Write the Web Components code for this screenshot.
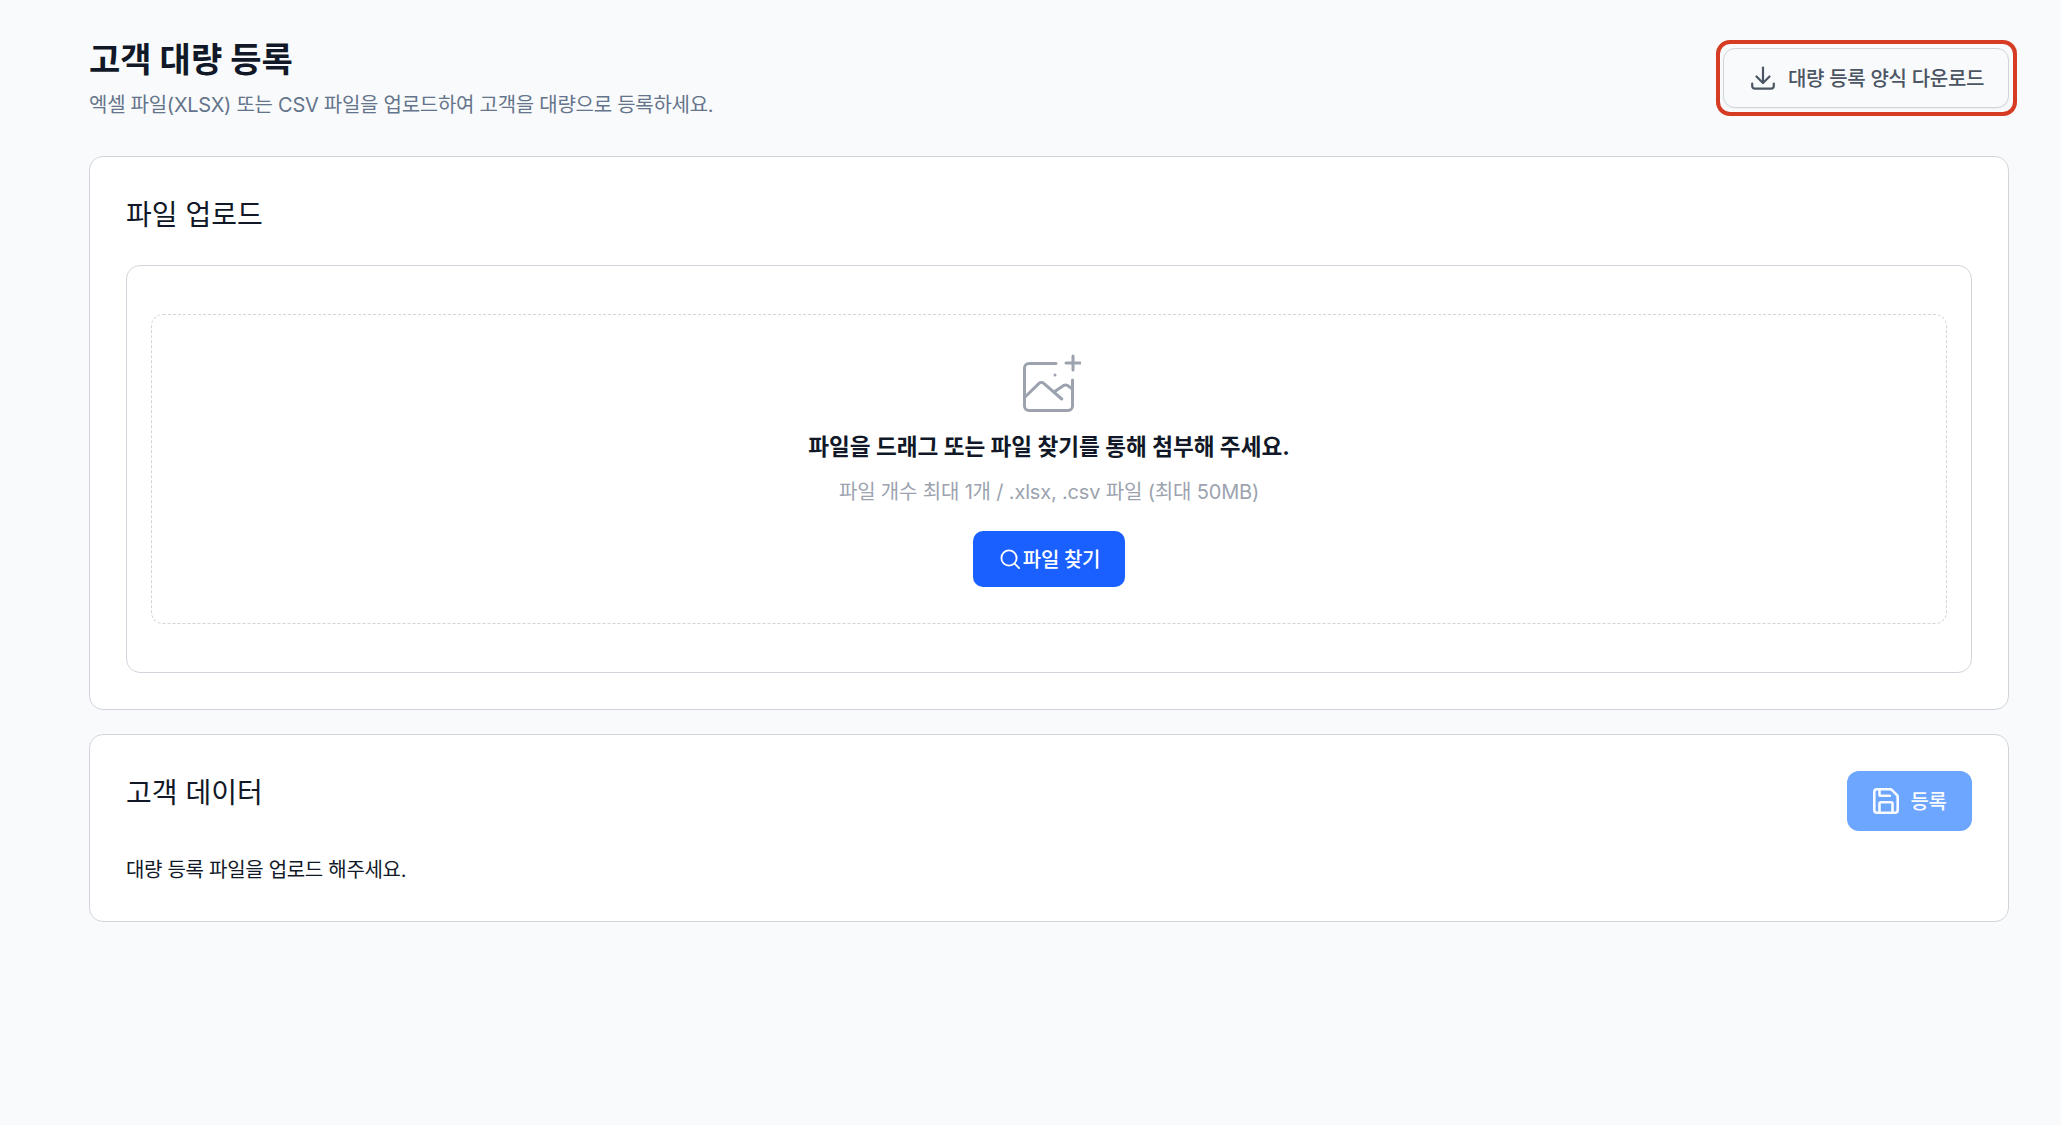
<!DOCTYPE html>
<html lang="ko">
<head>
<meta charset="utf-8">
<title>고객 대량 등록</title>
<style>
  html, body {
    margin: 0;
    background: #f9fafb;
    font-family: Inter, "Noto Sans CJK KR", sans-serif;
    color: #111827;
  }
</style>
</head>
<body>
<bulk-page>
  <page-header slot="header">
    <span slot="title">고객 대량 등록</span>
    <span slot="desc">엑셀 파일(XLSX) 또는 CSV 파일을 업로드하여 고객을 대량으로 등록하세요.</span>
    <ui-button slot="action" variant="outline">
      <svg slot="icon" width="24" height="24" viewBox="0 0 24 24" fill="none" stroke="currentColor" stroke-width="2.2" stroke-linecap="round" stroke-linejoin="round"><path d="M12 1.5v15"/><path d="M5.5 10.5l6.5 6.5 6.5-6.5"/><path d="M1.2 17.5v2.2a3 3 0 0 0 3 3h15.6a3 3 0 0 0 3-3v-2.2"/></svg>
      대량 등록 양식 다운로드
    </ui-button>
  </page-header>

  <ui-card>
    <span slot="title">파일 업로드</span>
    <upload-zone>
      <span slot="title">파일을 드래그 또는 파일 찾기를 통해 첨부해 주세요.</span>
      <span slot="hint">파일 개수 최대 1개 / .xlsx, .csv 파일 (최대 50MB)</span>
      <ui-button slot="action" variant="primary">
        <svg slot="icon" width="20" height="20" viewBox="0 0 20 20" fill="none" stroke="currentColor" stroke-width="1.8" stroke-linecap="round"><circle cx="9" cy="9" r="7.6"/><path d="M14.6 14.6l4.5 4.5"/></svg>
        파일 찾기
      </ui-button>
    </upload-zone>
  </ui-card>

  <ui-card>
    <span slot="title">고객 데이터</span>
    <ui-button slot="action" variant="disabled">
      <svg slot="icon" width="26" height="26" viewBox="2 2 20 20" fill="none" stroke="currentColor" stroke-width="2" stroke-linecap="round" stroke-linejoin="round"><path d="M15.2 3a2 2 0 0 1 1.4.6l3.8 3.8a2 2 0 0 1 .6 1.4V19a2 2 0 0 1-2 2H5a2 2 0 0 1-2-2V5a2 2 0 0 1 2-2z"/><path d="M17 21v-7a1 1 0 0 0-1-1H8a1 1 0 0 0-1 1v7"/><path d="M7 3v4a1 1 0 0 0 1 1h7"/></svg>
      등록
    </ui-button>
    <p style="margin:24px 0 0;font-size:20px;line-height:30px;letter-spacing:-.3px;">대량 등록 파일을 업로드 해주세요.</p>
  </ui-card>
</bulk-page>

<script>
const $button = document.createElement('template')
$button.innerHTML =
`<style>
  :host {
    display: inline-flex;
  }
  button {
    display: inline-flex;
    align-items: center;
    box-sizing: border-box;
    margin: 0;
    font: inherit;
    font-size: 20px;
    letter-spacing: -.3px;
    white-space: nowrap;
    cursor: pointer;
  }
  .label {
    margin-bottom: 2px;
  }
  :host([variant=outline]) button {
    height: 60px;
    width: 286px;
    padding: 0 0 0 27px;
    gap: 13px;
    font-weight: 500;
    color: #4b5563;
    background: #f9fafb;
    border: 1px solid #d1d5db;
    border-radius: 12px;
    box-shadow: 0 1px 2px rgba(17, 24, 39, .05);
  }
  :host([variant=primary]) button {
    height: 56px;
    width: 152px;
    justify-content: center;
    gap: 3px;
    padding: 0 0 0 2px;
    font-weight: 500;
    color: #fff;
    background: #1a5fff;
    border: 0;
    border-radius: 10px;
  }
  :host([variant=disabled]) button {
    height: 60px;
    width: 125px;
    justify-content: center;
    gap: 11px;
    padding: 0 0 0 1px;
    font-weight: 500;
    color: #f8faff;
    background: #6ca6ff;
    border: 0;
    border-radius: 12px;
    cursor: default;
  }
  ::slotted(svg) {
    display: block;
    flex: none;
  }
</style>
<button><slot name="icon"></slot><span class="label"><slot></slot></span></button>`

class UiButton extends HTMLElement {
  constructor () {
    super()
    this.attachShadow({ mode: 'open' }).appendChild($button.content.cloneNode(true))
  }
}

const $header = document.createElement('template')
$header.innerHTML =
`<style>
  :host {
    display: flex;
    justify-content: space-between;
    align-items: flex-start;
  }
  h1 {
    margin: 0;
    font-size: 34px;
    line-height: 40px;
    font-weight: 700;
    color: #111827;
  }
  p {
    margin: 14px 0 0;
    font-size: 20px;
    line-height: 22px;
    letter-spacing: -.27px;
    color: #64748b;
  }
  .mark {
    display: flex;
    margin-right: -8px;
    padding: 4px 4px 4px 3px;
    border: 4px solid #d63b24;
    border-radius: 14px;
  }
</style>
<div>
  <h1><slot name="title"></slot></h1>
  <p><slot name="desc"></slot></p>
</div>
<div class="mark"><slot name="action"></slot></div>`

class PageHeader extends HTMLElement {
  constructor () {
    super()
    this.attachShadow({ mode: 'open' }).appendChild($header.content.cloneNode(true))
  }
}

const $card = document.createElement('template')
$card.innerHTML =
`<style>
  :host {
    display: block;
    box-sizing: border-box;
    padding: 36px;
    background: #fff;
    border: 1px solid #d1d5db;
    border-radius: 14px;
  }
  .head {
    display: flex;
    justify-content: space-between;
    align-items: flex-start;
  }
  h2 {
    margin: 0;
    font-size: 28px;
    line-height: 44px;
    font-weight: 400;
    color: #111827;
  }
</style>
<div class="head">
  <h2><slot name="title"></slot></h2>
  <slot name="action"></slot>
</div>
<slot></slot>`

class UiCard extends HTMLElement {
  constructor () {
    super()
    this.attachShadow({ mode: 'open' }).appendChild($card.content.cloneNode(true))
  }
}

const $zone = document.createElement('template')
$zone.innerHTML =
`<style>
  :host {
    display: block;
    margin-top: 28px;
    padding: 48px 24px;
    background: #fff;
    border: 1px solid #d1d5db;
    border-radius: 14px;
  }
  .drop {
    display: flex;
    flex-direction: column;
    align-items: center;
    box-sizing: border-box;
    height: 310px;
    padding-top: 39px;
    border: 1px dashed #d1d5db;
    border-radius: 12px;
  }
  svg {
    display: block;
    margin-left: 6px;
  }
  .title {
    margin-top: 19px;
    font-size: 22.6px;
    line-height: 32px;
    font-weight: 700;
    color: #111827;
  }
  .hint {
    margin-top: 15px;
    font-size: 20px;
    line-height: 28px;
    letter-spacing: -.17px;
    color: #9ca3af;
  }
  .action {
    display: flex;
    margin-top: 25px;
  }
</style>
<div class="drop">
  <svg width="58" height="58" viewBox="0 0 58 58" fill="none" stroke="#9ca3af" stroke-width="3" stroke-linecap="round" stroke-linejoin="round">
    <path d="M33 9.5H6a4.5 4.5 0 0 0-4.5 4.5v38a4.5 4.5 0 0 0 4.5 4.5h39a4.5 4.5 0 0 0 4.5-4.5V26"/>
    <path d="M2 43l14-13.6a3.5 3.5 0 0 1 4.8 0L38.7 45"/>
    <path d="M31 38l9.6-6.4a3.5 3.5 0 0 1 3.9 0L49.5 35"/>
    <path d="M50 2v14M43 9h14"/>
    <path d="M32 21h.01"/>
  </svg>
  <div class="title"><slot name="title"></slot></div>
  <div class="hint"><slot name="hint"></slot></div>
  <div class="action"><slot name="action"></slot></div>
</div>`

class UploadZone extends HTMLElement {
  constructor () {
    super()
    this.attachShadow({ mode: 'open' }).appendChild($zone.content.cloneNode(true))
  }
}

const $page = document.createElement('template')
$page.innerHTML =
`<style>
  :host {
    display: flex;
    flex-direction: column;
    gap: 24px;
    box-sizing: border-box;
    min-height: 1125px;
    padding: 40px 52px 0 89px;
  }
  .top {
    margin-bottom: 16px;
  }
</style>
<div class="top"><slot name="header"></slot></div>
<slot></slot>`

class BulkPage extends HTMLElement {
  constructor () {
    super()
    this.attachShadow({ mode: 'open' }).appendChild($page.content.cloneNode(true))
  }
}

customElements.define('ui-button', UiButton)
customElements.define('page-header', PageHeader)
customElements.define('ui-card', UiCard)
customElements.define('upload-zone', UploadZone)
customElements.define('bulk-page', BulkPage)
</script>
</body>
</html>
